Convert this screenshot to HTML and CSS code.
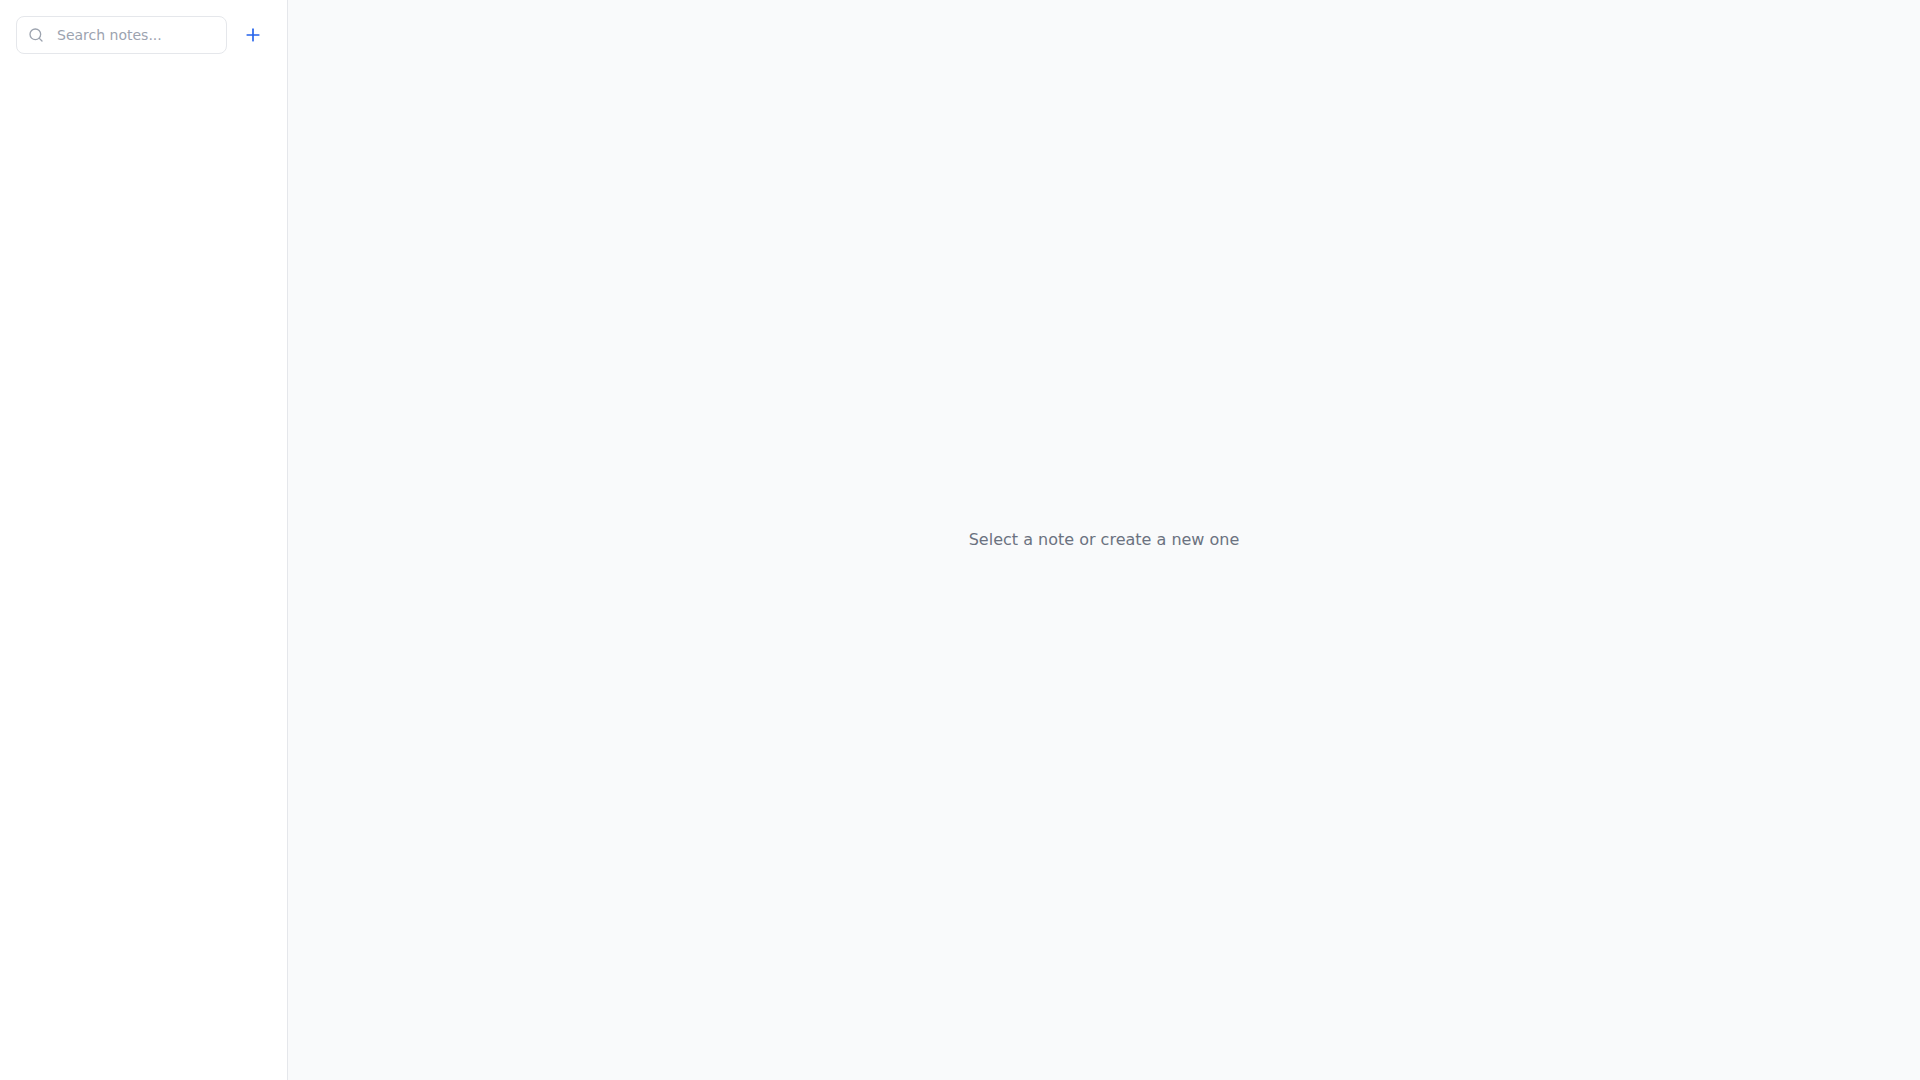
FILE: index.html
```html
<!DOCTYPE html>
<html lang="en">
<head>
  <meta charset="UTF-8" />
  <meta name="viewport" content="width=device-width, initial-scale=1.0" />
  <title>Notes</title>
  <link rel="stylesheet" href="styles.css">
</head>
<body>
  <div class="app">
    <aside class="sidebar">
      <div class="toolbar">
        <label class="search">
          <svg class="search-icon" viewBox="0 0 24 24" aria-hidden="true">
            <circle cx="11" cy="11" r="8" />
            <path d="m21 21-4.3-4.3" />
          </svg>
          <input type="text" class="search-input" placeholder="Search notes..." aria-label="Search notes" />
        </label>
        <button type="button" class="add-btn" aria-label="New note">
          <svg class="add-icon" viewBox="0 0 24 24" aria-hidden="true">
            <path d="M5 12h14" />
            <path d="M12 5v14" />
          </svg>
        </button>
      </div>
    </aside>

    <main class="content">
      <p class="empty">Select a note or create a new one</p>
    </main>
  </div>
</body>
</html>
```

FILE: styles.css
```css
* {
  box-sizing: border-box;
}
body {
  margin: 0;
  background: #f9fafb;
  font-family: "DejaVu Sans", sans-serif;
  font-size: 16px;
  line-height: 24px;
}
.app {
  display: flex;
  min-height: 100vh;
}
.sidebar {
  width: 288px;
  flex-shrink: 0;
  background: #fff;
  border-right: 1px solid #e5e7eb;
}
.toolbar {
  display: flex;
  align-items: center;
  gap: 8px;
  padding: 16px;
}
.search {
  position: relative;
  display: flex;
  flex: 1;
  min-width: 0;
}
svg {
  display: block;
  fill: none;
  stroke: currentColor;
  stroke-width: 2;
  stroke-linecap: round;
  stroke-linejoin: round;
}
/* sits over the left padding of the input */
.search-icon {
  position: absolute;
  top: 50%;
  left: 12px;
  width: 16px;
  height: 16px;
  transform: translateY(-50%);
  color: #9ca3af;
  pointer-events: none;
}
.search-input {
  width: 100%;
  min-width: 0;
  padding: 8px 16px 8px 40px;
  border: 1px solid #e5e7eb;
  border-radius: 8px;
  outline: none;
  background: #fff;
  color: #111827;
  font-family: inherit;
  font-size: 14px;
  line-height: 20px;
}
.search-input::placeholder {
  color: #9ca3af;
}
.search-input:focus {
  border-color: #2563eb;
}
.add-btn {
  padding: 8px;
  border: 0;
  border-radius: 8px;
  background: none;
  color: #2563eb;
  cursor: pointer;
}
.add-btn:hover {
  background: #eff6ff;
}
.add-icon {
  width: 20px;
  height: 20px;
}
.content {
  display: flex;
  flex: 1;
  align-items: center;
  justify-content: center;
}
.empty {
  margin: 0;
  color: #6b7280;
}
```
